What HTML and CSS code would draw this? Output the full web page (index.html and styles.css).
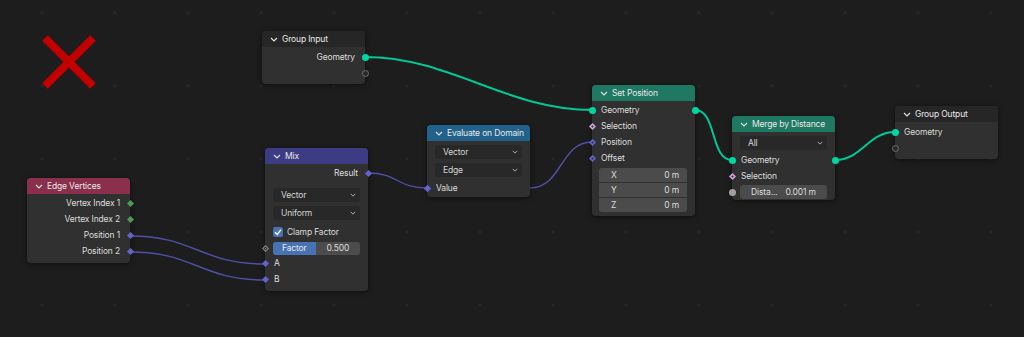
FILE: index.html
```html
<!DOCTYPE html>
<html lang="en">
<head>
    <meta charset="UTF-8">
    <title>Geometry Nodes</title>
    <link rel="stylesheet" href="styles.css">
</head>
<body>
    <div class="canvas">
        <svg class="wires" width="1024" height="337">
            <path class="cross" d="M45,38 L93,86 M93,38 L45,86"/>
            <path class="wire geo" d="M365,57 C450,57 507,110 592,110"/>
            <path class="wire geo" d="M695,110 C717,110 710,160 732,160"/>
            <path class="wire geo" d="M835,160 C862,160 868,132 895,132"/>
            <path class="wire vec" d="M130,236 C195,236 200,264 265,264"/>
            <path class="wire vec" d="M130,252 C195,252 200,280 265,280"/>
            <path class="wire vec" d="M368,173 C398,173 397,188 427,188"/>
            <path class="wire vec" d="M530,188 C562,188 560,142 592,142"/>
        </svg>

        <!-- Group Input -->
        <div class="node n-group-input">
            <div class="head plain">
                <svg class="chev" viewBox="0 0 8 5"><path d="M1 1 L4 4 L7 1"/></svg>
                Group Input
            </div>
            <div class="body pad-2">
                <div class="row out">Geometry<span class="sock geo"></span></div>
                <div class="row out"><span class="sock empty"></span></div>
            </div>
        </div>

        <!-- Edge Vertices -->
        <div class="node n-edge-vertices">
            <div class="head input">
                <svg class="chev" viewBox="0 0 8 5"><path d="M1 1 L4 4 L7 1"/></svg>
                Edge Vertices
            </div>
            <div class="body pad-1">
                <div class="row out">Vertex Index 1<span class="sock int"></span></div>
                <div class="row out">Vertex Index 2<span class="sock int"></span></div>
                <div class="row out">Position 1<span class="sock vec"></span></div>
                <div class="row out">Position 2<span class="sock vec"></span></div>
            </div>
        </div>

        <!-- Mix -->
        <div class="node n-mix">
            <div class="head mix">
                <svg class="chev" viewBox="0 0 8 5"><path d="M1 1 L4 4 L7 1"/></svg>
                Mix
            </div>
            <div class="body pad-1">
                <div class="row out">Result<span class="sock vec"></span></div>
                <div class="select first">Vector<svg class="drop" viewBox="0 0 8 5"><path d="M1 1 L4 4 L7 1"/></svg></div>
                <div class="select">Uniform<svg class="drop" viewBox="0 0 8 5"><path d="M1 1 L4 4 L7 1"/></svg></div>
                <div class="check-row">
                    <span class="checkbox"><svg viewBox="0 0 10 10"><path d="M2 5.2 L4.2 7.4 L8 2.6"/></svg></span>
                    Clamp Factor
                </div>
                <div class="field-row">
                    <span class="sock float-field"></span>
                    <div class="slider">
                        <span class="fill">Factor</span>
                        <span class="val">0.500</span>
                    </div>
                </div>
                <div class="row in"><span class="sock vec"></span>A</div>
                <div class="row in"><span class="sock vec"></span>B</div>
            </div>
        </div>

        <!-- Evaluate on Domain -->
        <div class="node n-evaluate">
            <div class="head converter">
                <svg class="chev" viewBox="0 0 8 5"><path d="M1 1 L4 4 L7 1"/></svg>
                Evaluate on Domain
            </div>
            <div class="body pad-0">
                <div class="select first-sm">Vector<svg class="drop" viewBox="0 0 8 5"><path d="M1 1 L4 4 L7 1"/></svg></div>
                <div class="select">Edge<svg class="drop" viewBox="0 0 8 5"><path d="M1 1 L4 4 L7 1"/></svg></div>
                <div class="row in both gap-top-3"><span class="sock vec"></span>Value<span class="sock vec right"></span></div>
            </div>
        </div>

        <!-- Set Position -->
        <div class="node n-set-position">
            <div class="head geometry">
                <svg class="chev" viewBox="0 0 8 5"><path d="M1 1 L4 4 L7 1"/></svg>
                Set Position
            </div>
            <div class="body pad-1">
                <div class="row in both"><span class="sock geo"></span>Geometry<span class="sock geo right"></span></div>
                <div class="row in"><span class="sock bool-field"></span>Selection</div>
                <div class="row in"><span class="sock vec-field"></span>Position</div>
                <div class="row in"><span class="sock vec-field"></span>Offset</div>
                <div class="vector">
                    <div class="comp"><span>X</span><span>0 m</span></div>
                    <div class="comp"><span>Y</span><span>0 m</span></div>
                    <div class="comp"><span>Z</span><span>0 m</span></div>
                </div>
            </div>
        </div>

        <!-- Merge by Distance -->
        <div class="node n-merge">
            <div class="head geometry">
                <svg class="chev" viewBox="0 0 8 5"><path d="M1 1 L4 4 L7 1"/></svg>
                Merge by Distance
            </div>
            <div class="body pad-0">
                <div class="select first-sm">All<svg class="drop" viewBox="0 0 8 5"><path d="M1 1 L4 4 L7 1"/></svg></div>
                <div class="row in both gap-top"><span class="sock geo"></span>Geometry<span class="sock geo right"></span></div>
                <div class="row in"><span class="sock bool-field"></span>Selection</div>
                <div class="field-row">
                    <span class="sock float"></span>
                    <div class="number"><span>Dista...</span><span>0.001 m</span></div>
                </div>
            </div>
        </div>

        <!-- Group Output -->
        <div class="node n-group-output">
            <div class="head plain">
                <svg class="chev" viewBox="0 0 8 5"><path d="M1 1 L4 4 L7 1"/></svg>
                Group Output
            </div>
            <div class="body pad-2">
                <div class="row in"><span class="sock geo"></span>Geometry</div>
                <div class="row in"><span class="sock empty"></span></div>
            </div>
        </div>
    </div>
</body>
</html>
```

FILE: styles.css
```css
body {
    margin: 0;
    background-color: #1d1d1d;
    font-family: Inter, "Noto Sans", sans-serif;
    font-size: 8.5px;
    letter-spacing: -0.15px;
    color: #dcdcdc;
}

.canvas {
    position: relative;
    width: 1024px;
    height: 337px;
    overflow: hidden;
    background-color: #1d1d1d;
    background-image: radial-gradient(circle, #292929 1px, transparent 1.6px);
    background-size: 73px 73px;
    background-position: 5.5px -23.5px;
}

.wires {
    position: absolute;
    left: 0;
    top: 0;
}

.cross {
    stroke: #c20000;
    stroke-width: 8;
    fill: none;
}

.wire {
    fill: none;
}

.wire.geo {
    stroke: #00c896;
    stroke-width: 2;
}

.wire.vec {
    stroke: #5050a8;
    stroke-width: 1.4;
}

/* nodes sit on a free canvas */
.node {
    position: absolute;
    width: 103px;
    background-color: #303030;
    border-radius: 4px;
    box-shadow: 0 1px 5px rgba(0, 0, 0, 0.5);
}

.n-group-input  { left: 262px; top: 31px; }
.n-edge-vertices { left: 27px; top: 178px; }
.n-mix          { left: 265px; top: 148px; }
.n-evaluate     { left: 427px; top: 125px; }
.n-set-position { left: 592px; top: 85px; }
.n-merge        { left: 732px; top: 116px; }
.n-group-output { left: 895px; top: 106px; }

.head {
    height: 16px;
    display: flex;
    align-items: center;
    gap: 4px;
    padding-left: 8px;
    border-radius: 4px 4px 0 0;
    color: #e8e8e8;
}

.head.plain { background-color: #262626; }
.head.input { background-color: #8a2f4c; }
.head.mix { background-color: #3c3c84; }
.head.converter { background-color: #22628a; }
.head.geometry { background-color: #1e7862; }

.chev {
    width: 8px;
    height: 5px;
    fill: none;
    stroke: #e0e0e0;
    stroke-width: 1.2;
}

.body.pad-0 { padding: 0 0 1px; }
.body.pad-1 { padding: 1px 0 4px; }
.body.pad-2 { padding: 2px 0 3px; }

.row {
    position: relative;
    height: 16px;
    display: flex;
    align-items: center;
    padding: 0 10px;
}

.row.out {
    justify-content: flex-end;
}

.row.in {
    padding-left: 9px;
}

.row.gap-top {
    margin-top: 2px;
}

.row.gap-top-3 {
    margin-top: 3px;
}

/* sockets */
.sock {
    position: absolute;
    width: 7px;
    height: 7px;
    box-sizing: border-box;
    border-radius: 50%;
}

.row.out .sock,
.sock.right {
    right: -3.5px;
    left: auto;
}

.row.in .sock,
.field-row .sock {
    left: -3.5px;
}

.row.in .sock.right {
    left: auto;
    right: -3.5px;
}

.sock.geo { background-color: #00d6a3; }

.sock.empty {
    border: 1px solid #6e6e6e;
    background-color: #2a2a2a;
}

.sock.float { background-color: #a1a1a1; }

.sock.int,
.sock.vec,
.sock.vec-field,
.sock.bool-field,
.sock.float-field {
    width: 5px;
    height: 5px;
    border-radius: 0;
    transform: rotate(45deg);
}

.row.out .sock.int,
.row.out .sock.vec,
.sock.vec.right {
    right: -2.5px;
}

.row.in .sock.vec,
.row.in .sock.vec-field,
.row.in .sock.bool-field,
.field-row .sock.float-field {
    left: -2.5px;
}

.sock.int { background-color: #4f9a55; }
.sock.vec { background-color: #6363d0; }

.sock.vec-field {
    background: radial-gradient(circle, #303030 0.8px, #6363d0 1.2px);
}

.sock.bool-field {
    background: radial-gradient(circle, #303030 0.8px, #c9a2d8 1.2px);
}

.sock.float-field {
    border: 1px solid #8a8a8a;
    background: radial-gradient(circle, #8a8a8a 0.6px, #303030 1px);
}

/* widgets */
.select {
    height: 14px;
    margin: 4px 8px 0;
    padding: 0 4px 0 8px;
    display: flex;
    align-items: center;
    justify-content: space-between;
    background-color: #282828;
    border-radius: 3px;
    color: #d4d4d4;
}

.select.first {
    margin-top: 7px;
}

.select.first-sm {
    margin-top: 4px;
}

.drop {
    width: 6px;
    height: 4px;
    fill: none;
    stroke: #bbbbbb;
    stroke-width: 1.2;
}

.check-row {
    height: 16px;
    margin-top: 4px;
    padding-left: 8px;
    display: flex;
    align-items: center;
    gap: 4px;
}

.checkbox {
    width: 10px;
    height: 10px;
    border-radius: 2px;
    background-color: #4772b3;
    display: flex;
}

.checkbox svg {
    width: 10px;
    height: 10px;
    fill: none;
    stroke: #ffffff;
    stroke-width: 1.5;
}

.field-row {
    position: relative;
    height: 14px;
    margin-top: 1px;
    padding: 0 8px;
    display: flex;
    align-items: center;
}

.field-row .sock {
    top: 3.5px;
}

.field-row .sock.float-field {
    top: 4.5px;
}

.slider {
    flex: 1;
    height: 13px;
    display: flex;
    border-radius: 3px;
    overflow: hidden;
    background-color: #4c4c4c;
}

.slider .fill {
    width: 49%;
    background-color: #4772b3;
    display: flex;
    align-items: center;
    justify-content: center;
    color: #e8e8e8;
}

.slider .val {
    flex: 1;
    display: flex;
    align-items: center;
    justify-content: center;
    color: #dcdcdc;
}

.vector {
    margin: 2px 8px 0 7px;
    display: flex;
    flex-direction: column;
    gap: 1px;
}

.comp {
    height: 14px;
    display: flex;
    align-items: center;
    justify-content: space-between;
    padding: 0 8px 0 12px;
    background-color: #4b4b4b;
}

.comp:first-child { border-radius: 3px 3px 0 0; }
.comp:last-child { border-radius: 0 0 3px 3px; }

.number {
    flex: 1;
    height: 14px;
    display: flex;
    align-items: center;
    justify-content: center;
    gap: 8px;
    background-color: #4b4b4b;
    border-radius: 3px;
}
```
